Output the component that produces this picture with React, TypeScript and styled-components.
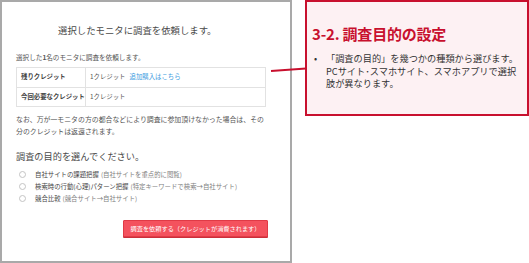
import React from "react";
import styled, { createGlobalStyle } from "styled-components";

const Global = createGlobalStyle`
  html, body {
    margin: 0;
    padding: 0;
    background: #ffffff;
  }
  body {
    font-family: "Noto Sans CJK JP", "Noto Sans", sans-serif;
    color: #555;
  }
`;

const Stage = styled.div`
  position: relative;
  display: flex;
  align-items: flex-start;
  width: 529px;
  height: 263px;
  overflow: hidden;
`;

const Shot = styled.div`
  box-sizing: border-box;
  width: 292px;
  height: 263px;
  border: 2px solid #a9a9a9;
  padding: 22px 0 0 14px;
  display: flex;
  flex-direction: column;
`;

const Title = styled.h1`
  margin: 0 0 16px 42px;
  font-size: 9.4px;
  line-height: 12px;
  font-weight: 400;
  color: #4a4a4a;
`;

const Lead = styled.p`
  margin: 0 0 5px;
  font-size: 6.6px;
  line-height: 10px;
  color: #555;
  b {
    font-weight: 700;
  }
`;

const Table = styled.table`
  width: 250px;
  border-collapse: collapse;
  font-size: 6.4px;
  color: #555;
  td {
    border: 1px solid #e2e2e2;
    height: 18.5px;
    padding: 0 0 0 4px;
    line-height: 10px;
  }
  td:first-child {
    width: 64px;
    font-weight: 700;
    color: #444;
  }
`;

const Link = styled.span`
  color: #3a9be0;
  margin-left: 4px;
`;

const Note = styled.p`
  margin: 6px 0 0;
  width: 252px;
  font-size: 6.9px;
  line-height: 12px;
  color: #555;
`;

const SubTitle = styled.h2`
  margin: 12px 0 5px;
  font-size: 9.2px;
  line-height: 14px;
  font-weight: 400;
  color: #4a4a4a;
`;

const Options = styled.ul`
  list-style: none;
  margin: 0;
  padding: 0;
`;

const Option = styled.li`
  display: flex;
  align-items: center;
  height: 12px;
  font-size: 6.4px;
  color: #444;
`;

const Radio = styled.span`
  box-sizing: border-box;
  width: 7px;
  height: 7px;
  border: 1px solid #c4c4c4;
  border-radius: 50%;
  margin: 0 9px 0 3px;
`;

const Aside = styled.span`
  color: #808080;
  margin-left: 2px;
`;

const Button = styled.button`
  align-self: flex-start;
  margin: 16px 0 0 107px;
  box-sizing: border-box;
  width: 145px;
  height: 17px;
  padding: 0;
  border: 1px solid #e03a46;
  border-radius: 1px;
  background: #f4525e;
  color: #ffffff;
  font-family: "Noto Sans CJK JP", sans-serif;
  font-size: 6.2px;
  line-height: 15px;
  text-align: center;
  box-shadow: 0 1px 0 #c9303b;
`;

const Callout = styled.div`
  box-sizing: border-box;
  width: 224px;
  height: 116px;
  margin-left: 13px;
  border: 2px solid #c8102e;
  background: #fdf1f3;
  padding: 23px 4px 0 5px;
`;

const CalloutTitle = styled.h3`
  margin: 0 0 9px;
  font-size: 15px;
  line-height: 18px;
  font-weight: 700;
  color: #c8102e;
  letter-spacing: -0.2px;
`;

const Bullets = styled.ul`
  margin: 0;
  padding: 0;
  list-style: none;
`;

const Bullet = styled.li`
  display: flex;
  font-size: 9.2px;
  line-height: 12.5px;
  color: #333;
  white-space: nowrap;
  &::before {
    content: "•";
    width: 14px;
    flex: none;
    padding-left: 2px;
    box-sizing: border-box;
  }
`;

const Connector = styled.svg`
  position: absolute;
  left: 0;
  top: 0;
  pointer-events: none;
`;

export default function App() {
  return (
    <Stage>
      <Global />
      <Shot>
        <Title>選択したモニタに調査を依頼します。</Title>
        <Lead>
          選択した<b>1</b>名のモニタに調査を依頼します。
        </Lead>
        <Table>
          <tbody>
            <tr>
              <td>残りクレジット</td>
              <td>
                1クレジット<Link>追加購入はこちら</Link>
              </td>
            </tr>
            <tr>
              <td>今回必要なクレジット</td>
              <td>1クレジット</td>
            </tr>
          </tbody>
        </Table>
        <Note>
          なお、万が一モニタの方の都合などにより調査に参加頂けなかった場合は、その分のクレジットは返還されます。
        </Note>
        <SubTitle>調査の目的を選んでください。</SubTitle>
        <Options>
          <Option>
            <Radio />
            自社サイトの課題把握<Aside>(自社サイトを重点的に閲覧)</Aside>
          </Option>
          <Option>
            <Radio />
            検索時の行動(心理)パターン把握<Aside>(特定キーワードで検索→自社サイト)</Aside>
          </Option>
          <Option>
            <Radio />
            競合比較<Aside>(競合サイト→自社サイト)</Aside>
          </Option>
        </Options>
        <Button>調査を依頼する（クレジットが消費されます）</Button>
      </Shot>
      <Callout>
        <CalloutTitle>3-2. 調査目的の設定</CalloutTitle>
        <Bullets>
          <Bullet>
            <span>
              「調査の目的」を幾つかの種類から選びます。
              <br />
              PCサイト･スマホサイト、スマホアプリで選択
              <br />
              肢が異なります。
            </span>
          </Bullet>
        </Bullets>
      </Callout>
      <Connector width="529" height="263">
        <line x1="271" y1="71" x2="306" y2="68.5" stroke="#c8102e" strokeWidth="2" />
      </Connector>
    </Stage>
  );
}
